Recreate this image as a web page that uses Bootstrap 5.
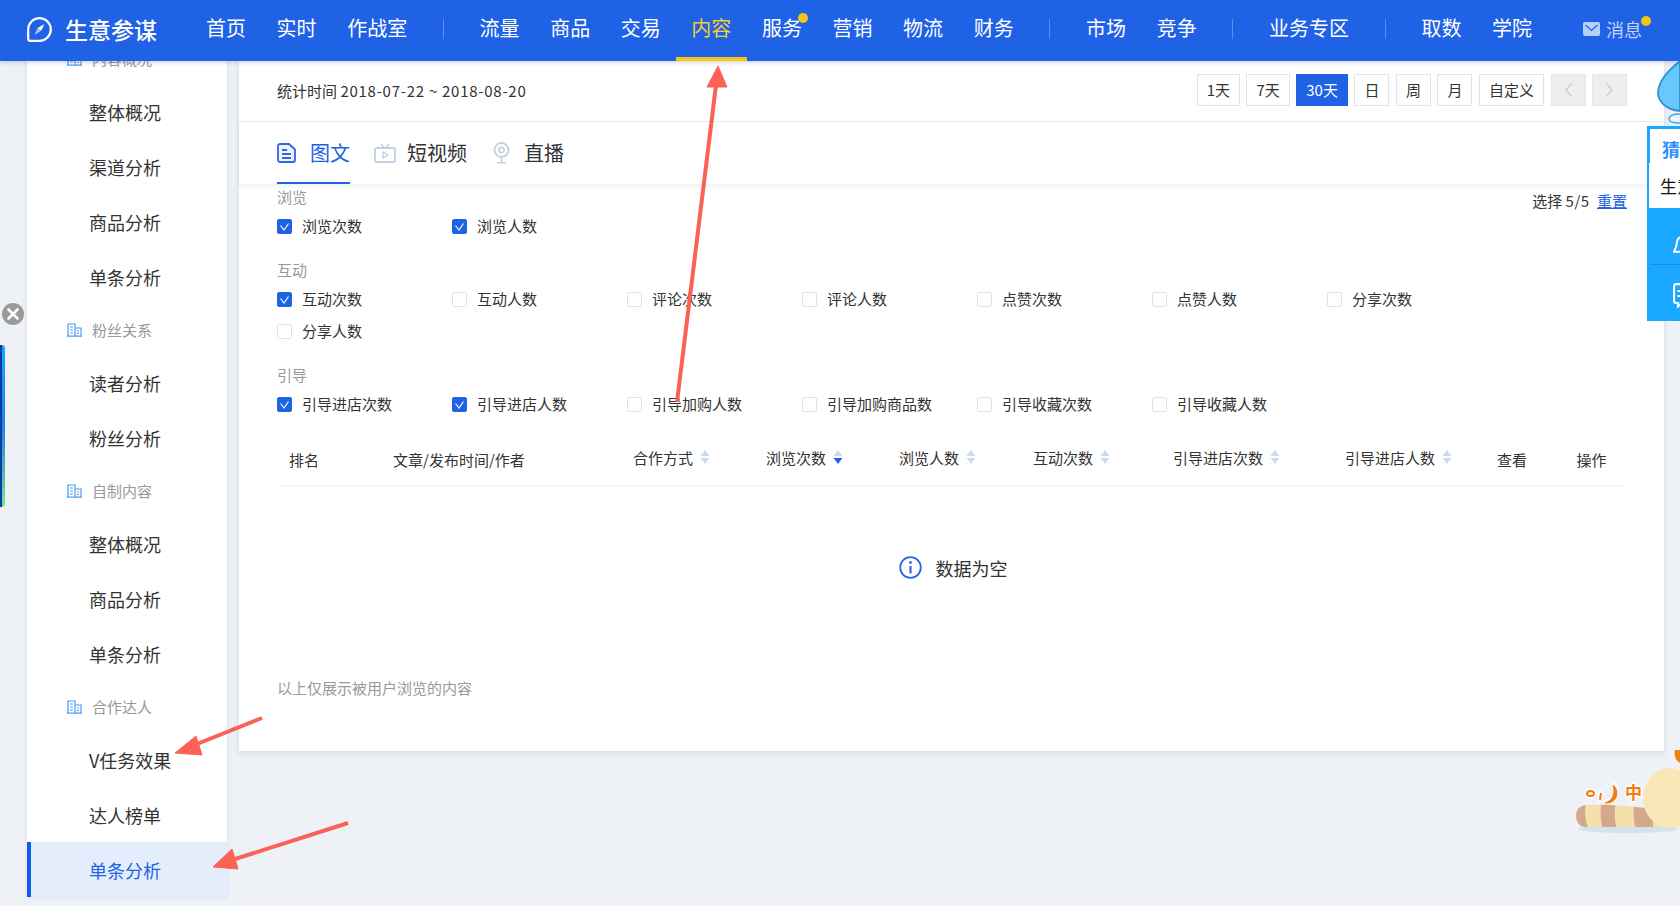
<!DOCTYPE html>
<html lang="zh-CN">
<head>
<meta charset="utf-8">
<title>生意参谋</title>
<link href="https://cdn.jsdelivr.net/npm/bootstrap@5.3.0/dist/css/bootstrap.min.css" rel="stylesheet">
<style>
html,body{height:906px;overflow:hidden}
body{background:#eef1f6;font-family:"Noto Sans CJK SC","Liberation Sans",sans-serif;color:#333;font-size:15px;position:relative}
a{text-decoration:none}
.sy-head{height:61px;background:#2062e6;position:relative;z-index:5;box-shadow:0 2px 4px rgba(30,50,90,.18)}
.sy-brand{width:190.700px;padding-left:27px;gap:13px;color:#fff;font-size:23px;font-weight:500;line-height:1;padding-bottom:3px}
.sy-head .nav-link{position:relative;height:61px;padding:0 15.300px 5px;color:#fff;font-size:20px;line-height:1;display:flex;align-items:center;white-space:nowrap}
.sy-head .nav-link.active{color:#f6cf2f}
.sy-head .nav-link.active::after{content:"";position:absolute;left:0;right:0;bottom:0;height:4px;background:#f5c518}
.sy-sep{width:1px;height:20px;background:rgba(255,255,255,.28);margin:0 20.400px 3px;align-self:center}
.sy-dot{position:absolute;width:10px;height:10px;border-radius:50%;background:#f5c518}
.sy-dot-a{left:51px;top:13px}
.sy-msg{margin-left:auto;margin-right:38px;color:rgba(255,255,255,.72);font-size:18px;line-height:1;gap:6px;position:relative;padding-bottom:4px}
.sy-dot-b{right:-9px;top:-4px}
.sy-body{margin-left:27px;gap:12px}
.sy-side{width:200px;margin-top:-28px;background:#fff;box-shadow:0 1px 4px rgba(60,80,120,.1);align-self:flex-start}
.sy-side .list-group-item{border:0;border-radius:0;padding:0 0 0 62px;height:55px;display:flex;align-items:center;font-size:18px;color:#333;line-height:1}
.sy-side .list-group-item.active{background:#e3edfb;color:#2062e6;border-left:4px solid #0d5ceb;padding-left:58px;margin:0}
.sy-side .sy-cap{height:51px;padding-left:40px;font-size:15px;color:#999;gap:10px}
.sy-main{width:1425px;height:690px;margin-top:0;background:#fff;box-shadow:0 2px 6px rgba(60,80,120,.14)}
.sy-top{height:61px;padding:0 37px 2px 38px;border-bottom:1px solid #ececec;gap:6.500px}
.sy-date{margin-right:auto;line-height:1}
.sy-date-n{letter-spacing:.74px}
.sy-main .btn-sm{height:32px;padding:0 9px;border:1px solid #e4e4e4;border-radius:0;font-size:15px;line-height:30px;color:#333;background:#fff}
.sy-main .btn-sm.sy-on{background:#2062e6;border-color:#2062e6;color:#fff}
.sy-main .btn-sm.sy-off{background:#eee;border-color:#e6e6e6;width:35px;padding:0;display:flex;align-items:center;justify-content:center;opacity:1}
.sy-tabs{height:62px;padding-left:38px;gap:24px;box-shadow:0 2px 4px rgba(60,80,120,.1);position:relative}
.sy-tab{height:62px;display:flex;align-items:center;font-size:20px;line-height:1;color:#333;padding-bottom:1px;position:relative}
.sy-tab.sy-cur{color:#2062e6}
.sy-tab.sy-cur::after{content:"";position:absolute;left:0;right:0;bottom:0;height:2px;background:#2062e6}
.sy-ico{width:33px;display:flex;align-items:center}
.sy-filter{padding:0 37px 0 38px}
.sy-cap2{height:26px;line-height:26px;color:#999;font-size:15px}
.sy-count{line-height:1;padding-top:9px}
.sy-count b{font-weight:400;letter-spacing:.5px}
.sy-count a{color:#2062e6;text-decoration:underline;margin-left:4px}
.sy-grid{display:grid;grid-template-columns:repeat(7,175px);grid-auto-rows:32px;margin-bottom:15px}
.sy-chk{display:flex;align-items:center;gap:10px;line-height:1;color:#333;padding-bottom:2px}
.sy-chk .form-check-input{width:15px;height:15px;margin:0 0 -2px;border:1px solid #e3e3e3;border-radius:2px;flex:none}
.sy-chk .form-check-input:checked{background-color:#2062e6;border-color:#2062e6;background-size:15px 15px;background-image:url("data:image/svg+xml,%3csvg xmlns='http://www.w3.org/2000/svg' viewBox='0 0 15 15'%3e%3cpath fill='none' stroke='%23fff' stroke-width='1.100' d='M3.500 6.500l3.500 4.500 4.500-6.500'/%3e%3c/svg%3e")}
.sy-tbl{margin:16px 0 0;table-layout:fixed;width:1350px}
.sy-tbl th{height:49px;padding:0 0 2px;font-weight:400;font-size:15px;color:#333;vertical-align:middle;border-bottom:1px solid #f0f0f0;line-height:1}
.sy-tbl th:first-child{padding-left:12px}
.sy-c1{width:116px}.sy-c2{width:240px}.sy-c3{width:133px}.sy-c4{width:134px}.sy-c5{width:140px}.sy-c6{width:172px}.sy-c7{width:152px}.sy-c8{width:79.500px}.sy-c9{width:50.500px}
.sy-sort{display:inline-flex;align-items:center;gap:7px;padding-bottom:4px}
.sy-empty{height:164px;gap:14px;font-size:18px;line-height:1;padding-left:2px}
.sy-note{margin-top:27px;color:#999;line-height:22px}
.sy-left-x{position:absolute;left:2px;top:301px;z-index:3}
.sy-left-bar{position:absolute;left:0;top:345px;width:5px;height:162px;border-radius:0 3px 3px 0;background:linear-gradient(90deg,#0a3aa8 0 40%,transparent 40%),linear-gradient(#1fa8f7,#1a86e0 50%,#7be68a);z-index:3}
.sy-float{position:absolute;left:1647px;top:126px;width:33px;height:195px;background:#1aa7ff;padding:3px 0 0 3px;overflow:hidden;z-index:4}
.sy-float-a{height:34px;background:#fff;color:#2f8fff;font-weight:700;font-size:18px;line-height:40px;padding-left:12px;white-space:nowrap;overflow:hidden}
.sy-float-b{height:45px;margin-left:-1px;background:#fff;color:#111;font-size:17px;line-height:46px;padding-left:11px;white-space:nowrap}
.sy-float-c{height:57px;border-bottom:1px solid #178fd8;padding:24px 0 0 23px}
.sy-float-d{padding:18px 0 0 23px}
.sy-art{position:absolute;z-index:4}
.sy-drop{left:1655px;top:56px}
.sy-pet{left:1570px;top:748px}
.sy-arrows{position:absolute;left:0;top:0;z-index:6;pointer-events:none}
</style>
</head>
<body>
<svg width="0" height="0" class="position-absolute">
  <symbol id="bld" viewBox="0 0 15 14"><path d="M1 1h7v12H1zM8 5h6v8H8zM0 13.200h15M3 4h3M3 7h3M3 10h3M10 8h2M10 10.500h2" fill="none" stroke="#4a9bf5" stroke-width="1.200"/></symbol>
  <symbol id="srt" viewBox="0 0 10 16"><path d="M5 1l4.500 6h-9z" fill="#cddaea"/><path d="M5 15l4.500-6h-9z" fill="#cddaea"/></symbol>
  <symbol id="srta" viewBox="0 0 10 16"><path d="M5 1l4.500 6h-9z" fill="#cddaea"/><path d="M5 15l4.500-6h-9z" fill="#2062e6"/></symbol>
</svg>

<header class="sy-head d-flex align-items-center">
  <a class="sy-brand d-flex align-items-center" href="#">
    <svg width="25" height="25" viewBox="0 0 25 25"><path d="M12.500 1.200A11.300 11.300 0 1 1 12.500 23.800H3.200a2 2 0 0 1-2-2V12.500A11.300 11.300 0 0 1 12.500 1.200z" fill="none" stroke="#fff" stroke-width="2.200"/><path d="M17.500 7l-3.300 6.800-3.600-2.800z" fill="#fff"/><path d="M7.500 18l3.100-7 3.600 2.800z" fill="#a9c6f7"/></svg>
    <span>生意参谋</span>
  </a>
  <nav class="nav flex-nowrap flex-grow-1 align-items-center">
    <a class="nav-link" href="#">首页</a>
    <a class="nav-link" href="#">实时</a>
    <a class="nav-link" href="#">作战室</a>
    <span class="sy-sep"></span>
    <a class="nav-link" href="#">流量</a>
    <a class="nav-link" href="#">商品</a>
    <a class="nav-link" href="#">交易</a>
    <a class="nav-link active" href="#">内容</a>
    <a class="nav-link" href="#">服务<span class="sy-dot sy-dot-a"></span></a>
    <a class="nav-link" href="#">营销</a>
    <a class="nav-link" href="#">物流</a>
    <a class="nav-link" href="#">财务</a>
    <span class="sy-sep"></span>
    <a class="nav-link" href="#">市场</a>
    <a class="nav-link" href="#">竞争</a>
    <span class="sy-sep"></span>
    <a class="nav-link" href="#">业务专区</a>
    <span class="sy-sep"></span>
    <a class="nav-link" href="#">取数</a>
    <a class="nav-link" href="#">学院</a>
    <a class="sy-msg d-flex align-items-center" href="#">
      <svg width="17" height="14" viewBox="0 0 17 14"><rect width="17" height="14" rx="2" fill="#b6cff8"/><path d="M2.500 3l6 5.500 6-5.500" fill="none" stroke="#2062e6" stroke-width="1.200"/></svg>
      <span>消息</span>
      <span class="sy-dot sy-dot-b"></span>
    </a>
  </nav>
</header>

<div class="sy-body d-flex">
  <aside class="sy-side">
    <div class="list-group list-group-flush">
      <div class="list-group-item sy-cap"><svg width="15" height="14"><use href="#bld"/></svg>内容概况</div>
      <a class="list-group-item" href="#">整体概况</a>
      <a class="list-group-item" href="#">渠道分析</a>
      <a class="list-group-item" href="#">商品分析</a>
      <a class="list-group-item" href="#">单条分析</a>
      <div class="list-group-item sy-cap"><svg width="15" height="14"><use href="#bld"/></svg>粉丝关系</div>
      <a class="list-group-item" href="#">读者分析</a>
      <a class="list-group-item" href="#">粉丝分析</a>
      <div class="list-group-item sy-cap"><svg width="15" height="14"><use href="#bld"/></svg>自制内容</div>
      <a class="list-group-item" href="#">整体概况</a>
      <a class="list-group-item" href="#">商品分析</a>
      <a class="list-group-item" href="#">单条分析</a>
      <div class="list-group-item sy-cap"><svg width="15" height="14"><use href="#bld"/></svg>合作达人</div>
      <a class="list-group-item" href="#">V任务效果</a>
      <a class="list-group-item" href="#">达人榜单</a>
      <a class="list-group-item active" href="#">单条分析</a>
    </div>
  </aside>

  <main class="sy-main">
    <div class="sy-top d-flex align-items-center">
      <span class="sy-date">统计时间 <span class="sy-date-n">2018-07-22 ~ 2018-08-20</span></span>
      <button class="btn btn-sm" type="button">1天</button>
      <button class="btn btn-sm" type="button">7天</button>
      <button class="btn btn-sm sy-on" type="button">30天</button>
      <button class="btn btn-sm" type="button">日</button>
      <button class="btn btn-sm" type="button">周</button>
      <button class="btn btn-sm" type="button">月</button>
      <button class="btn btn-sm" type="button">自定义</button>
      <button class="btn btn-sm sy-off" type="button"><svg width="9" height="16" viewBox="0 0 9 16"><path d="M7.500 1.500L2 8l5.500 6.500" fill="none" stroke="#ccc" stroke-width="1.300"/></svg></button>
      <button class="btn btn-sm sy-off" type="button"><svg width="9" height="16" viewBox="0 0 9 16"><path d="M1.500 1.500L7 8l-5.500 6.500" fill="none" stroke="#ccc" stroke-width="1.300"/></svg></button>
    </div>

    <div class="sy-tabs d-flex">
      <a class="sy-tab sy-cur" href="#"><span class="sy-ico"><svg width="19" height="20" viewBox="0 0 19 20"><path d="M3 1h9l6 5.500V17a2 2 0 0 1-2 2H3a2 2 0 0 1-2-2V3a2 2 0 0 1 2-2z" fill="#eef3fe" stroke="#2f66e6" stroke-width="1.800"/><path d="M5 7h5M5 11h9M5 15h9" stroke="#2f66e6" stroke-width="1.800"/></svg></span>图文</a>
      <a class="sy-tab" href="#"><span class="sy-ico"><svg width="22" height="20" viewBox="0 0 22 20"><path d="M7 1l3.500 4M15 1l-3.500 4" stroke="#c3d0e3" stroke-width="1.500" fill="none"/><rect x="1" y="5" width="20" height="14" rx="1.500" fill="none" stroke="#c3d0e3" stroke-width="1.800"/><path d="M9 9l5 3-5 3z" fill="none" stroke="#c3d0e3" stroke-width="1.400"/></svg></span>短视频</a>
      <a class="sy-tab" href="#"><span class="sy-ico"><svg width="20" height="22" viewBox="0 0 20 22"><circle cx="10.500" cy="8" r="7" fill="none" stroke="#c3d0e3" stroke-width="1.800"/><circle cx="10.500" cy="8" r="2.600" fill="none" stroke="#c3d0e3" stroke-width="1.600"/><path d="M10.500 15v5M6 20.800h9" stroke="#c3d0e3" stroke-width="1.600"/></svg></span>直播</a>
    </div>

    <section class="sy-filter">
      <div class="d-flex justify-content-between align-items-start">
        <div class="sy-cap2">浏览</div>
        <div class="sy-count">选择 <b>5/5</b> <a href="#">重置</a></div>
      </div>
      <div class="sy-grid">
        <label class="sy-chk"><input class="form-check-input" type="checkbox" checked>浏览次数</label>
        <label class="sy-chk"><input class="form-check-input" type="checkbox" checked>浏览人数</label>
      </div>
      <div class="sy-cap2">互动</div>
      <div class="sy-grid">
        <label class="sy-chk"><input class="form-check-input" type="checkbox" checked>互动次数</label>
        <label class="sy-chk"><input class="form-check-input" type="checkbox">互动人数</label>
        <label class="sy-chk"><input class="form-check-input" type="checkbox">评论次数</label>
        <label class="sy-chk"><input class="form-check-input" type="checkbox">评论人数</label>
        <label class="sy-chk"><input class="form-check-input" type="checkbox">点赞次数</label>
        <label class="sy-chk"><input class="form-check-input" type="checkbox">点赞人数</label>
        <label class="sy-chk"><input class="form-check-input" type="checkbox">分享次数</label>
        <label class="sy-chk"><input class="form-check-input" type="checkbox">分享人数</label>
      </div>
      <div class="sy-cap2">引导</div>
      <div class="sy-grid">
        <label class="sy-chk"><input class="form-check-input" type="checkbox" checked>引导进店次数</label>
        <label class="sy-chk"><input class="form-check-input" type="checkbox" checked>引导进店人数</label>
        <label class="sy-chk"><input class="form-check-input" type="checkbox">引导加购人数</label>
        <label class="sy-chk"><input class="form-check-input" type="checkbox">引导加购商品数</label>
        <label class="sy-chk"><input class="form-check-input" type="checkbox">引导收藏次数</label>
        <label class="sy-chk"><input class="form-check-input" type="checkbox">引导收藏人数</label>
      </div>

      <table class="table sy-tbl">
        <colgroup>
          <col class="sy-c1"><col class="sy-c2"><col class="sy-c3"><col class="sy-c3"><col class="sy-c4"><col class="sy-c5"><col class="sy-c6"><col class="sy-c7"><col class="sy-c8"><col class="sy-c9">
        </colgroup>
        <thead>
          <tr>
            <th>排名</th>
            <th>文章/发布时间/作者</th>
            <th><span class="sy-sort">合作方式<svg width="10" height="16"><use href="#srt"/></svg></span></th>
            <th><span class="sy-sort">浏览次数<svg width="10" height="16"><use href="#srta"/></svg></span></th>
            <th><span class="sy-sort">浏览人数<svg width="10" height="16"><use href="#srt"/></svg></span></th>
            <th><span class="sy-sort">互动次数<svg width="10" height="16"><use href="#srt"/></svg></span></th>
            <th><span class="sy-sort">引导进店次数<svg width="10" height="16"><use href="#srt"/></svg></span></th>
            <th><span class="sy-sort">引导进店人数<svg width="10" height="16"><use href="#srt"/></svg></span></th>
            <th>查看</th>
            <th>操作</th>
          </tr>
        </thead>
      </table>

      <div class="sy-empty d-flex justify-content-center align-items-center">
        <svg width="23" height="23" viewBox="0 0 23 23"><circle cx="11.500" cy="11.500" r="10.300" fill="none" stroke="#2f66e6" stroke-width="1.800"/><circle cx="11.500" cy="6.500" r="1.400" fill="#2f66e6"/><path d="M11.500 10v7.500" stroke="#2f66e6" stroke-width="2.200"/></svg>
        <span>数据为空</span>
      </div>
      <div class="sy-note">以上仅展示被用户浏览的内容</div>
    </section>
  </main>
</div>

<div class="sy-left-x"><svg width="22" height="22" viewBox="0 0 22 22"><circle cx="11" cy="11" r="11" fill="#9b9b9b"/><path d="M6.500 6.500l9 9M15.500 6.500l-9 9" stroke="#fff" stroke-width="2.600" stroke-linecap="round"/></svg></div>
<div class="sy-left-bar"></div>

<div class="sy-float">
  <div class="sy-float-a">猜你喜欢</div>
  <div class="sy-float-b">生意参谋</div>
  <div class="sy-float-c"><svg width="7" height="18" viewBox="0 0 7 18"><path d="M7 1.500C4 2.500 4 6 3.500 9 3 12 1.500 14 1 15.800h6" fill="none" stroke="#fff" stroke-width="2"/></svg></div>
  <div class="sy-float-d"><svg width="7" height="25" viewBox="0 0 7 25"><path d="M7 1.200H3a2 2 0 0 0-2 2V18a2 2 0 0 0 2 2h2v3.500L7 21" fill="none" stroke="#fff" stroke-width="2.200"/><path d="M4.500 8h2.500M4.500 13h2.500" stroke="#fff" stroke-width="2"/></svg></div>
</div>

<svg class="sy-art sy-drop" width="25" height="72" viewBox="0 0 25 72"><path d="M25 5C16 12 4 24 3 36c-.5 9 8 18 22 19z" fill="#69c7fb" stroke="#2f93d2" stroke-width="1.800"/><path d="M25 58c-7 0-11 2-11 5 0 2.500 3 4 11 4" fill="#eaf4fb" stroke="#4aa5da" stroke-width="1.500"/></svg>

<svg class="sy-art sy-pet" width="110" height="92" viewBox="0 0 110 92">
  <defs><clipPath id="tailc"><path d="M90 79H15a9 11 0 0 1-9-11c0-7 4-11 12-11 25-1 50 2 72 5z"/></clipPath></defs>
  <ellipse cx="58" cy="81" rx="50" ry="4" fill="#d3e3ec"/>
  <g clip-path="url(#tailc)">
    <rect x="0" y="50" width="100" height="35" fill="#f5dfab"/>
    <path d="M0 50h18c-4 8-4 20 1 32H0zM32 50h15c-3 10-3 20 0 32H33c-3-10-3-22-1-32zM65 50h18v32H66c-3-10-3-22-1-32z" fill="#d2a98e"/>
  </g>
  <ellipse cx="100" cy="50" rx="27" ry="30" fill="#fbe6b7"/>
  <path d="M105 2c-1 5 0 10 5 13V2z" fill="#f57c12"/>
  <g fill="none" stroke="#fff" stroke-width="5" stroke-linecap="round" opacity=".85"><ellipse cx="20.500" cy="45.500" rx="4" ry="3"/><path d="M31 45l-1 7"/><path d="M44 37c5 6 3 16-8 17"/></g>
  <ellipse cx="20.500" cy="45.500" rx="3.500" ry="2.500" fill="none" stroke="#f57c12" stroke-width="2"/>
  <path d="M31 45l-1 7" stroke="#f57c12" stroke-width="2"/>
  <path d="M43 37c7 5 5 19-8 18 7-2 11-9 8-18z" fill="#f57c12" stroke="#f57c12"/>
  <text x="55" y="51" font-family="'Noto Sans CJK SC',sans-serif" font-size="17" font-weight="700" fill="#f57c12" stroke="#fff" stroke-width="3" paint-order="stroke">中</text>
</svg>

<svg class="sy-arrows" width="1680" height="906" viewBox="0 0 1680 906">
  <g fill="#fb6156" stroke="#fb6156">
    <path d="M677 402L716 85" stroke-width="4" fill="none"/>
    <path d="M718 66l9 21h-20z" stroke-width="1"/>
    <path d="M262 718L192 746" stroke-width="4" fill="none"/>
    <path d="M175 753l21-17 6 19z" stroke-width="1"/>
    <path d="M348 823L232 860" stroke-width="4" fill="none"/>
    <path d="M213 867l19-18 6 20z" stroke-width="1"/>
  </g>
</svg>
</body>
</html>
